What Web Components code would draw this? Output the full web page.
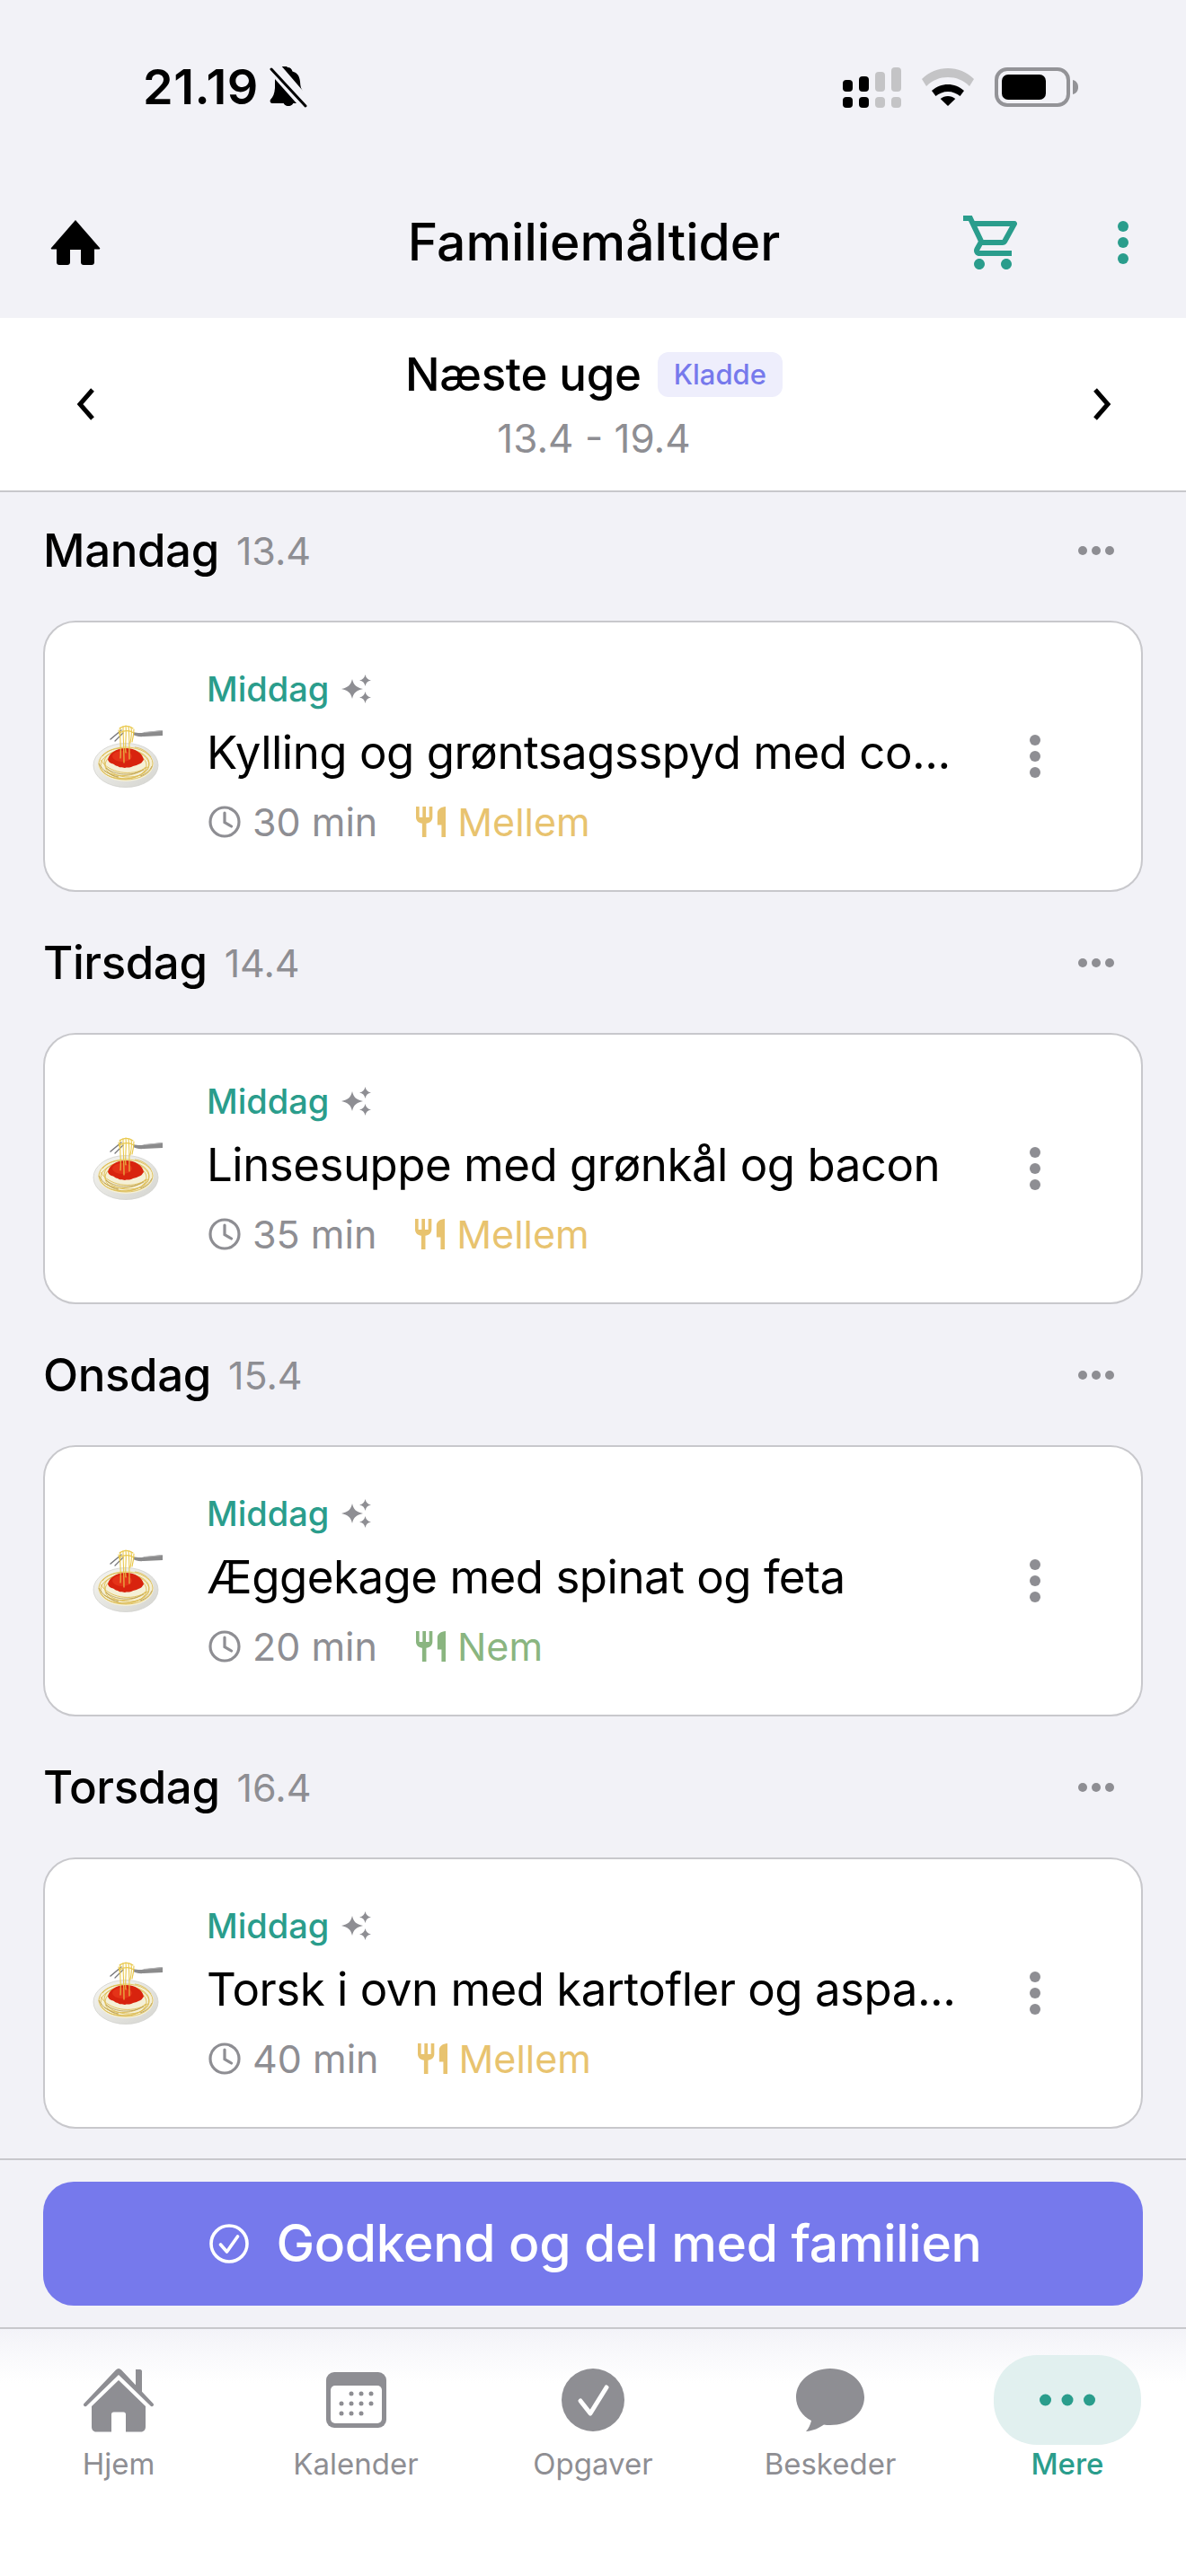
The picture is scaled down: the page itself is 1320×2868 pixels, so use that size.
<!DOCTYPE html>
<html lang="da">
<head>
<meta charset="utf-8">
<title>Familiemåltider</title>
<style>
html, body { margin: 0; padding: 0; }
body { background: #f2f2f7; font-family: Inter, "Liberation Sans", sans-serif; color: #000; }
family-app { width: 1320px; height: 2868px; }
</style>
</head>
<body>
<family-app></family-app>
<script>
const TEAL = "#2a9d8c";
const GRAY = "#8e8e93";

const clockIcon = `<svg width="36" height="36" viewBox="0 0 36 36" fill="none" stroke="${GRAY}" stroke-width="3.2" stroke-linecap="round"><circle cx="18" cy="18" r="16"/><path d="M18 8v10.5l7.5 4.5"/></svg>`;
const forkIcon = `<svg width="33" height="34" viewBox="3 2 18 20" preserveAspectRatio="none" fill="currentColor"><path d="M11 9H9V2H7v7H5V2H3v7c0 2.12 1.66 3.84 3.75 3.97V22h2.5v-9.03C11.34 12.84 13 11.12 13 9V2h-2v7zm5-3v8h2.5v8H21V2c-2.76 0-5 2.24-5 4z"/></svg>`;
const sparkleIcon = `<svg width="34" height="32" viewBox="0 0 34 32" fill="${GRAY}"><path d="M12 5c1.500 6.500 4.500 9.500 12 11-7.500 1.500-10.500 4.500-12 11C10.500 20.500 7.500 17.500 0 16c7.500-1.500 10.500-4.500 12-11z"/><path d="M26.500 0c.8 3.800 2.700 5.700 6.500 6.500-3.800.8-5.700 2.700-6.500 6.500-.8-3.800-2.700-5.700-6.500-6.500 3.800-.8 5.700-2.700 6.500-6.500z"/><path d="M26.500 19c.8 3.800 2.700 5.700 6.500 6.500-3.800.8-5.700 2.700-6.500 6.500-.8-3.800-2.700-5.700-6.500-6.500 3.800-.8 5.700-2.700 6.500-6.500z"/></svg>`;
const spaghettiIcon = `<svg width="80" height="72" viewBox="0 0 80 72">
  <defs><linearGradient id="plate" x1="0" y1="0" x2="1" y2="1"><stop offset="0" stop-color="#f6f6f2"/><stop offset="1" stop-color="#d4d4cf"/></linearGradient></defs>
  <ellipse cx="38" cy="46" rx="36" ry="24.500" fill="url(#plate)" stroke="#d2d2ce" stroke-width=".8"/>
  <ellipse cx="38" cy="44.500" rx="31" ry="19.500" fill="#f5f0d6"/>
  <g fill="none" stroke="#dcbc55" stroke-width=".9">
    <ellipse cx="38" cy="44" rx="30" ry="18"/>
    <ellipse cx="37" cy="45" rx="27" ry="16" transform="rotate(-4 37 45)"/>
    <ellipse cx="39" cy="44" rx="25" ry="15" transform="rotate(5 39 44)"/>
    <ellipse cx="38" cy="46" rx="23" ry="15"/>
    <path d="M10 40c8 14 34 20 52 8M14 52c12 8 34 8 46-4M12 36c6-7 14-9 22-9M48 26c8 1 14 5 18 11"/>
  </g>
  <g fill="none" stroke="#a8893a" stroke-width=".7">
    <path d="M16 49c10 8 28 10 42 2M8 44c4 8 12 13 22 15M54 58c6-2 11-6 13-11"/>
  </g>
  <path d="M18 40c1-7 9-13 20-13s19 6 20 13c-2 2-2 4-6 5-3 2-5 1-8 3-3 1-5 0-7 1-3-1-6 0-8-2-3 0-4-3-7-3-2-1-3-2-4-4z" fill="#d8230e"/>
  <ellipse cx="34" cy="36" rx="11" ry="6" fill="#e93a1c" opacity=".7"/>
  <path d="M21 17L33 7" stroke="#77777a" stroke-width="1.500" stroke-linecap="round"/>
  <path d="M26 19L35 10" stroke="#77777a" stroke-width="1.300" stroke-linecap="round"/>
  <path d="M46 9c5 1 8 1.500 12 .5L79 7v6l-21 1c-5 .6-9-.5-12-2z" fill="#8b8b8c"/>
  <path d="M58 9.500L79 7.500" stroke="#b5b5b6" stroke-width="1"/>
  <g fill="none" stroke="#e9c84c" stroke-width="1.100" stroke-linecap="round">
    <path d="M32 4c-1 10 1 22 0 34M35 3c0 12 1 24 1 40M38 2c1 10-1 20 0 30M41 3c1 8 1 20 1 36M44 4c1 6 0 12-1 17M47 6c0 5-1 10-2 14M30 7c1 3 1 6 2 9"/>
    <path d="M31 5c4-3 10-4 15 0M31 10c5-3 11-3 16 0"/>
  </g>
</svg>`;

const HEADER_ICONS = {
  bell: `<svg width="44" height="46" viewBox="0 0 44 46"><path fill="#000" d="M21 1c3 0 5 2 5.500 4.500C32 7 34.500 11 35 17c.3 5 1 8 3 10l-25-29c2-1 5-.5 8 3zM7 14l24 27H4c-2 0-3-2-2-4 3-3 4.500-7 5-13zM16 39h12c-.5 3-3 5-6 5s-5.500-2-6-5z"/><path d="M8 2l34 37" stroke="#f2f2f7" stroke-width="6"/><path d="M3 3l38 41" stroke="#000" stroke-width="3" stroke-linecap="round"/></svg>`,
  signal: `<svg width="65" height="45" viewBox="0 0 65 45"><g fill="#000"><rect x="0" y="14" width="11" height="13" rx="4"/><rect x="18" y="10" width="11" height="17" rx="4"/><rect x="0" y="33" width="11" height="12" rx="4"/><rect x="18" y="33" width="11" height="12" rx="4"/></g><g fill="#c4c4c6"><rect x="36" y="5" width="11" height="22" rx="4"/><rect x="54" y="0" width="11" height="27" rx="4"/><rect x="36" y="33" width="11" height="12" rx="4"/><rect x="54" y="33" width="11" height="12" rx="4"/></g></svg>`,
  wifi: `<svg width="58" height="42" viewBox="0 0 58 42"><path fill="#c4c4c6" d="M29 0c11 0 21 4 29 12l-5 8C46 13 38 10 29 10S12 13 5 20L0 12C8 4 18 0 29 0z"/><path fill="#000" d="M29 18c6.500 0 13 2.500 18 7l-4.500 6c-3.500-3-8.500-5-13.500-5s-10 2-13.500 5L11 25c5-4.500 11.500-7 18-7z"/><path fill="#000" d="M29 31c3 0 6 1 8.300 3L29 42l-8.300-8c2.300-2 5.300-3 8.300-3z"/></svg>`,
  battery: `<svg width="94" height="44" viewBox="0 0 94 44"><rect x="2" y="2" width="80" height="40" rx="12" fill="none" stroke="#939397" stroke-width="4"/><rect x="8" y="8" width="49" height="28" rx="7" fill="#000"/><path d="M87 14c4 1 6 4 6 8s-2 7-6 8z" fill="#939397"/></svg>`,
  home: `<svg width="56" height="50" viewBox="0 0 56 50" fill="#000"><path d="M28 0l27 31c.6.800.2 1.500-1 1.500H2c-1.200 0-1.600-.7-1-1.500z"/><path d="M7 30h42v17c0 1.700-1.300 3-3 3H37c-1.700 0-3-1.300-3-3V33H22v14c0 1.700-1.300 3-3 3H10c-1.700 0-3-1.300-3-3z"/></svg>`,
  cart: `<svg width="72" height="72" viewBox="0 0 24 24" fill="${TEAL}"><path d="M15.550 13c.750 0 1.410-.41 1.750-1.030l3.580-6.490A.996.996 0 0 0 20.010 4H5.210l-.94-2H1v2h2l3.600 7.590-1.350 2.440C4.520 15.370 5.480 17 7 17h12v-2H7l1.100-2h7.450zM6.160 6h12.150l-2.760 5H8.530L6.160 6zM7 18c-1.100 0-1.990.9-1.990 2S5.900 22 7 22s2-.9 2-2-.9-2-2-2zm10 0c-1.100 0-1.990.9-1.990 2s.89 2 1.990 2 2-.9 2-2-.9-2-2-2z"/></svg>`,
  kebab: `<svg width="14" height="50" viewBox="0 0 14 50" fill="${TEAL}"><circle cx="7" cy="7" r="6"/><circle cx="7" cy="25" r="6"/><circle cx="7" cy="43" r="6"/></svg>`,
};

const TAB_ICONS = {
  home: `<svg width="80" height="72" viewBox="0 0 80 72" fill="${GRAY}"><path d="M59 2h5c1 0 2 1 2 2v25l-7-7z"/><path d="M40 1c1 0 2 .5 3 1.500L78.500 40c1.500 1.700-.5 4-2.500 3L40 8 4 43c-2 1-4-1.300-2.500-3L37 2.500C38 1.500 39 1 40 1z"/><path d="M40 14l30 29v23c0 3-2 5.500-5 5.500H48V52c0-1.500-1-2.500-2.500-2.500h-11C33 49.500 32 50.500 32 52v19.500H15c-3 0-5-2.500-5-5.500V43z"/></svg>`,
  calendar: `<svg width="67" height="62" viewBox="0 0 67 62"><rect width="67" height="62" rx="9" fill="${GRAY}"/><rect x="5" y="15" width="57" height="42" rx="5" fill="#fff"/><g fill="${GRAY}"><circle cx="28" cy="24" r="2.500"/><circle cx="39" cy="24" r="2.500"/><circle cx="50" cy="24" r="2.500"/><circle cx="17" cy="35" r="2.500"/><circle cx="28" cy="35" r="2.500"/><circle cx="39" cy="35" r="2.500"/><circle cx="50" cy="35" r="2.500"/><circle cx="17" cy="46" r="2.500"/><circle cx="28" cy="46" r="2.500"/><circle cx="39" cy="46" r="2.500"/></g></svg>`,
  check: `<svg width="70" height="70" viewBox="0 0 70 70"><circle cx="35" cy="35" r="35" fill="${GRAY}"/><path d="M21 36l11 14 18-29" fill="none" stroke="#fff" stroke-width="5" stroke-linecap="round" stroke-linejoin="round"/></svg>`,
  bubble: `<svg width="76" height="70" viewBox="0 0 76 70" fill="${GRAY}"><path d="M38 0c21 0 38 14 38 32S59 63 38 63c-3 0-5 0-7-.5C26 66 19 69.500 11 70c3-3 5-8 6-12C7 53 0 43 0 32 0 14 17 0 38 0z"/></svg>`,
  more: `<svg width="62" height="14" viewBox="0 0 62 14" fill="${TEAL}"><circle cx="6.500" cy="7" r="6.500"/><circle cx="31" cy="7" r="6.500"/><circle cx="55.500" cy="7" r="6.500"/></svg>`,
};

class StatusBar extends HTMLElement {
  constructor() {
    super();
    this.attachShadow({ mode: "open" }).innerHTML = `<style>
:host { display: flex; justify-content: space-between; align-items: center; height: 194px; padding: 0 119px 0 159px; box-sizing: border-box; }
.left, .right { display: flex; align-items: center; }
.left { gap: 11px; }
.right { gap: 23px; }
.time { font: 600 54px/60px Inter, "Liberation Sans", sans-serif; letter-spacing: .5px; }
</style>
<div class="left"><span class="time">21.19</span>${HEADER_ICONS.bell}</div>
<div class="right">${HEADER_ICONS.signal}${HEADER_ICONS.wifi}${HEADER_ICONS.battery}</div>`;
  }
}

class AppHeader extends HTMLElement {
  constructor() {
    super();
    this.attachShadow({ mode: "open" }).innerHTML = `<style>
:host { display: grid; grid-template-columns: 1fr auto 1fr; align-items: center; height: 160px; padding: 0 63px 8px 65px; box-sizing: border-box; background: #f2f2f7; }
.title { font: 500 57px/70px Inter, "Liberation Sans", sans-serif; }
.actions { display: flex; justify-content: flex-end; align-items: center; gap: 102px; }
.left { display: flex; margin-left: -9px; }
</style>
<div class="left">${HEADER_ICONS.home}</div>
<div class="title"><slot></slot></div>
<div class="actions">${HEADER_ICONS.cart}${HEADER_ICONS.kebab}</div>`;
  }
}

class WeekNav extends HTMLElement {
  constructor() {
    super();
    const chevron = (d) => `<svg width="26" height="36" viewBox="0 0 26 36" fill="none" stroke="#000" stroke-width="5"><path d="${d}"/></svg>`;
    this.attachShadow({ mode: "open" }).innerHTML = `<style>
:host { display: flex; align-items: center; justify-content: space-between; height: 194px; padding: 0 81px 0 83px; box-sizing: border-box; background: #fff; border-bottom: 2px solid #c8c8cc; }
.mid { display: flex; flex-direction: column; align-items: center; gap: 14px; }
.row { display: flex; align-items: center; gap: 18px; }
.name { font: 500 51px/62px Inter, "Liberation Sans", sans-serif; letter-spacing: -.3px; }
.badge { font: 500 31px/50px Inter, "Liberation Sans", sans-serif; color: #7679ec; background: #eeeefc; border-radius: 12px; padding: 0 18px; }
.dates { font: 400 44px/52px Inter, "Liberation Sans", sans-serif; color: ${GRAY}; }
</style>
${chevron("M20 2L6 18l14 16")}
<div class="mid"><div class="row"><span class="name"><slot name="name"></slot></span><span class="badge"><slot name="badge"></slot></span></div><div class="dates"><slot name="dates"></slot></div></div>
${chevron("M6 2l14 16L6 34")}`;
  }
}

class DaySection extends HTMLElement {
  constructor() {
    super();
    this.attachShadow({ mode: "open" }).innerHTML = `<style>
:host { display: block; margin: 0 48px; padding-bottom: 40px; }
.head { display: flex; align-items: center; height: 78px; margin-bottom: 39px; }
.day { font: 500 51px/78px Inter, "Liberation Sans", sans-serif; letter-spacing: -.4px; }
.date { font: 400 43px/78px Inter, "Liberation Sans", sans-serif; color: ${GRAY}; margin-left: 19px; }
.more { margin-left: auto; margin-right: 32px; display: flex; gap: 5px; }
.more i { width: 10px; height: 10px; border-radius: 50%; background: ${GRAY}; }
</style>
<div class="head"><span class="day">${this.getAttribute("day")}</span><span class="date">${this.getAttribute("date")}</span><span class="more"><i></i><i></i><i></i></span></div>
<slot></slot>`;
  }
}

class RecipeCard extends HTMLElement {
  constructor() {
    super();
    const level = this.getAttribute("level");
    const color = level === "Nem" ? "#8ab580" : "#e8c36f";
    this.attachShadow({ mode: "open" }).innerHTML = `<style>
:host { display: flex; align-items: center; height: 302px; box-sizing: border-box; background: #fff; border: 2px solid #c8c8cc; border-radius: 36px; padding-left: 52px; }
.emoji { flex: none; display: flex; margin-right: 48px; }
.body { flex: 1; min-width: 0; display: flex; flex-direction: column; }
.kind { display: flex; align-items: center; gap: 14px; height: 48px; font: 500 38px/48px Inter, "Liberation Sans", sans-serif; color: ${TEAL}; }
.title { font: 400 51px/66px Inter, "Liberation Sans", sans-serif; letter-spacing: -.5px; margin-top: 14px; white-space: nowrap; }
.meta { display: flex; align-items: center; height: 54px; margin-top: 17px; font: 400 43px/54px Inter, "Liberation Sans", sans-serif; color: ${GRAY}; }
.clock { display: flex; margin: 0 13px 0 2px; }
.level { display: flex; align-items: center; gap: 13px; margin-left: 43px; color: ${color}; }
.kebab { flex: none; display: flex; flex-direction: column; gap: 6px; margin-right: 112px; margin-left: 40px; }
.kebab i { width: 12px; height: 12px; border-radius: 50%; background: ${GRAY}; }
svg { display: block; }
</style>
<div class="emoji">${spaghettiIcon}</div>
<div class="body">
  <div class="kind">Middag ${sparkleIcon}</div>
  <div class="title"><slot></slot></div>
  <div class="meta"><span class="clock">${clockIcon}</span>${this.getAttribute("time")}<span class="level">${forkIcon}${level}</span></div>
</div>
<div class="kebab"><i></i><i></i><i></i></div>`;
  }
}

class ApproveBar extends HTMLElement {
  constructor() {
    super();
    this.attachShadow({ mode: "open" }).innerHTML = `<style>
:host { display: block; padding: 24px 48px; border-top: 2px solid #c8c8cc; border-bottom: 2px solid #c8c8cc; background: #f2f2f7; }
.btn { display: flex; align-items: center; justify-content: center; gap: 30px; height: 138px; padding-left: 6px; border-radius: 34px; background: #7679ec; color: #fff; font: 500 57px/70px Inter, "Liberation Sans", sans-serif; letter-spacing: -.3px; }
</style>
<div class="btn"><svg width="44" height="44" viewBox="0 0 44 44" fill="none" stroke="#fff" stroke-width="3.600"><circle cx="22" cy="22" r="20"/><path d="M12.500 23l7 8 12-17" stroke-linecap="round" stroke-linejoin="round"/></svg><slot></slot></div>`;
  }
}

class TabItem extends HTMLElement {
  constructor() {
    super();
    const active = this.hasAttribute("active");
    this.attachShadow({ mode: "open" }).innerHTML = `<style>
:host { flex: 1; display: flex; flex-direction: column; align-items: center; }
.icon { width: 164px; height: 100px; display: flex; align-items: center; justify-content: center; border-radius: 48px; ${active ? "background: #e1f0ef;" : ""} }
.label { margin-top: 1px; font: ${active ? 500 : 400} 33px/40px Inter, "Liberation Sans", sans-serif; color: ${active ? TEAL : GRAY}; }
</style>
<div class="icon">${TAB_ICONS[this.getAttribute("icon")]}</div>
<div class="label"><slot></slot></div>`;
  }
}

class TabBar extends HTMLElement {
  constructor() {
    super();
    this.attachShadow({ mode: "open" }).innerHTML = `<style>
:host { display: flex; flex: none; height: 275px; box-sizing: border-box; padding-top: 29px; background: linear-gradient(#f3f3f8, #fff 60px); }
</style><slot></slot>`;
  }
}

class FamilyApp extends HTMLElement {
  constructor() {
    super();
    this.attachShadow({ mode: "open" }).innerHTML = `<style>
:host { display: flex; flex-direction: column; overflow: hidden; }
main { flex: 1; min-height: 0; padding-top: 26px; overflow: hidden; }
</style>
<status-bar></status-bar>
<app-header>Familiemåltider</app-header>
<week-nav>
  <span slot="name">Næste uge</span><span slot="badge">Kladde</span><span slot="dates">13.4 - 19.4</span>
</week-nav>
<main>
  <day-section day="Mandag" date="13.4"><recipe-card time="30 min" level="Mellem">Kylling og grøntsagsspyd med co...</recipe-card></day-section>
  <day-section day="Tirsdag" date="14.4"><recipe-card time="35 min" level="Mellem">Linsesuppe med grønkål og bacon</recipe-card></day-section>
  <day-section day="Onsdag" date="15.4"><recipe-card time="20 min" level="Nem">Æggekage med spinat og feta</recipe-card></day-section>
  <day-section day="Torsdag" date="16.4"><recipe-card time="40 min" level="Mellem">Torsk i ovn med kartofler og aspa...</recipe-card></day-section>
</main>
<approve-bar>Godkend og del med familien</approve-bar>
<tab-bar>
  <tab-item icon="home">Hjem</tab-item>
  <tab-item icon="calendar">Kalender</tab-item>
  <tab-item icon="check">Opgaver</tab-item>
  <tab-item icon="bubble">Beskeder</tab-item>
  <tab-item icon="more" active>Mere</tab-item>
</tab-bar>`;
  }
}

customElements.define("status-bar", StatusBar);
customElements.define("app-header", AppHeader);
customElements.define("week-nav", WeekNav);
customElements.define("day-section", DaySection);
customElements.define("recipe-card", RecipeCard);
customElements.define("approve-bar", ApproveBar);
customElements.define("tab-item", TabItem);
customElements.define("tab-bar", TabBar);
customElements.define("family-app", FamilyApp);
</script>
</body>
</html>
